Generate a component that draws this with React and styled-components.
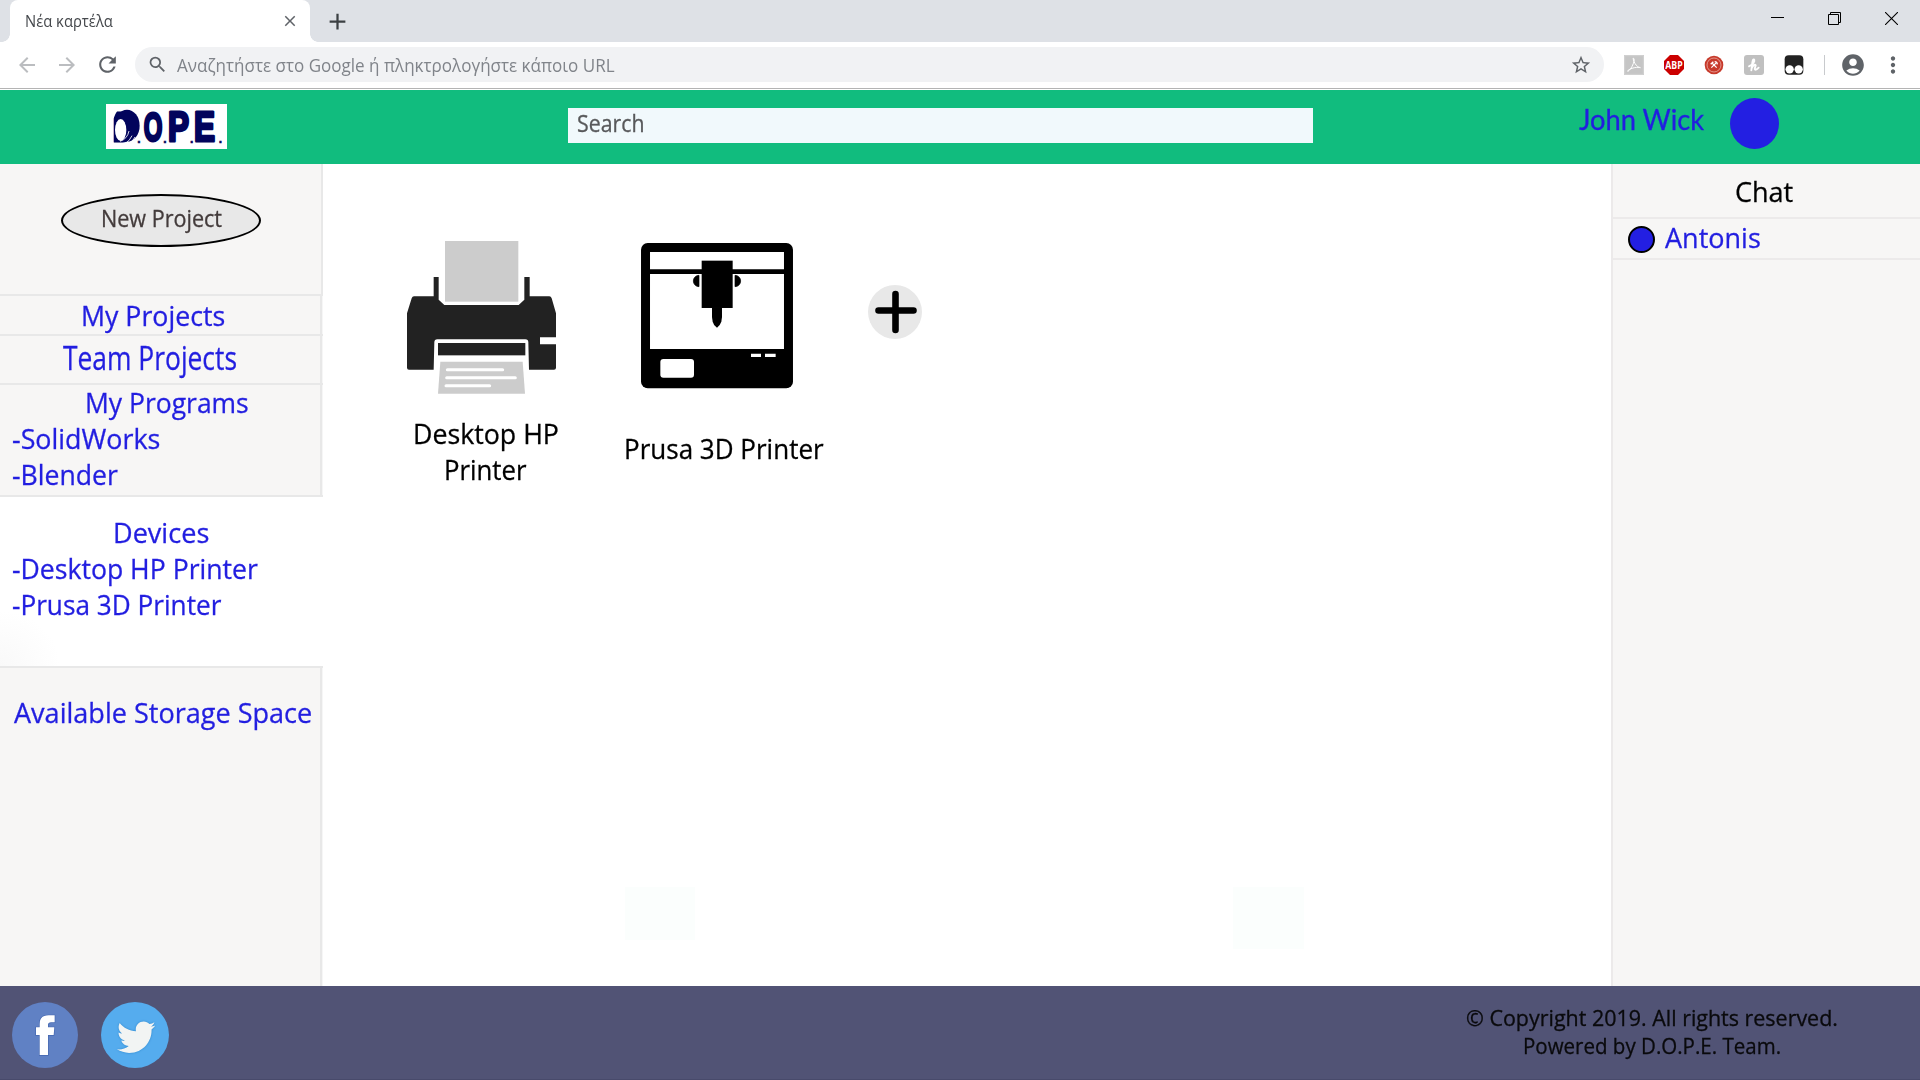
import React from 'react';
import styled, { createGlobalStyle } from 'styled-components';
import {
  MdArrowBack, MdArrowForward, MdRefresh, MdSearch, MdStarBorder,
  MdAccountCircle, MdMoreVert, MdClose, MdAdd,
} from 'react-icons/md';
import { FaTwitter } from 'react-icons/fa';

const LINK = '#221ee0';
const PANEL = '#f7f6f5';
const RULE = '#e8e8e8';

const Global = createGlobalStyle`
  * { box-sizing: border-box; }
  body {
    margin: 0;
    background: #fff;
    font-family: "Open Sans", "Noto Sans", sans-serif;
    overflow: hidden;
  }
  svg { display: block; flex: none; }
`;

const Page = styled.div`
  display: flex;
  flex-direction: column;
  width: 1920px;
  height: 1080px;
`;

/* Text */
const Label = styled.span`
  display: block;
  width: max-content;
  flex: none;
  margin-left: ${(p) => p.$indent || 0}px;
  font-family: ${(p) => (p.$face ? `"${p.$face}",` : '')} "Open Sans", sans-serif;
  font-size: ${(p) => p.$size || 28}px;
  line-height: ${(p) => p.$lead || 36}px;
  color: ${(p) => p.$color || LINK};
  white-space: nowrap;
  -webkit-text-stroke: ${(p) => (p.$thin ? '0' : '0.3px')} currentColor;
  transform: scaleX(${(p) => p.$stretch || 1});
  transform-origin: left center;
`;

/* Browser frame */
const TabStrip = styled.div`
  display: flex;
  flex: none;
  height: 42px;
  padding-left: 2px;
  background: #dee1e6;
`;

const TabFoot = styled.div`
  width: 8px;
  height: 42px;
  background: radial-gradient(circle at ${(p) => (p.$side === 'left' ? '0 0' : '100% 0')}, #dee1e6 7.5px, #fff 8px) bottom / 8px 8px no-repeat;
`;

const Tab = styled.div`
  display: flex;
  align-items: center;
  justify-content: space-between;
  width: 300px;
  height: 42px;
  padding: 0 11px 0 15px;
  border-radius: 8px 8px 0 0;
  background: #fff;
  color: #5f6368;
`;

const NewTab = styled.div`
  display: flex;
  align-items: center;
  margin-left: 6px;
  color: #3c4043;
`;

const WindowButtons = styled.div`
  display: flex;
  align-items: center;
  gap: 44px;
  height: 37px;
  margin-left: auto;
  padding-right: 22px;
`;

const Toolbar = styled.div`
  display: flex;
  flex: none;
  align-items: center;
  height: 46px;
  padding: 0 0 1px 15px;
  background: #fff;
  color: #5f6368;
`;

const NavIcon = styled.div`
  display: flex;
  margin-right: ${(p) => p.$after}px;
  color: ${(p) => (p.$off ? '#bbbdc0' : '#5f6368')};
`;

const Omnibox = styled.div`
  display: flex;
  align-items: center;
  width: 1469px;
  height: 35px;
  padding: 0 12px;
  border-radius: 18px;
  background: #f1f2f4;
`;

const StarSlot = styled.div`
  display: flex;
  margin-left: auto;
`;

const Extensions = styled.div`
  display: flex;
  align-items: center;
  gap: 20px;
  margin-left: 20px;
`;

const Divider = styled.div`
  width: 1px;
  height: 20px;
  margin: 0 14.5px 0 20px;
  background: #c8cacd;
`;

const ProfileSlot = styled.div`
  display: flex;
  margin-right: 14px;
`;

const FrameEdge = styled.div`
  flex: none;
  height: 2px;
  border-top: 1px solid #b4b4b4;
  background: #fff;
`;

/* Site header */
const Header = styled.header`
  display: flex;
  flex: none;
  align-items: flex-start;
  height: 74px;
  padding-left: 106px;
  background: #11bc7e;
`;

const LogoSlot = styled.div`
  margin: 14px 341px 0 0;
`;

const SearchField = styled.div`
  display: flex;
  align-items: center;
  width: 745px;
  height: 35px;
  margin-top: 18px;
  padding: 0 0 5px 9px;
  background: #f1f9fc;
`;

const UserName = styled.div`
  width: 151px;
  margin: 11px 0 0 266px;
`;

const Avatar = styled.div`
  width: 49px;
  height: 51px;
  margin-top: 8px;
  border-radius: 50%;
  background: #231fe2;
`;

/* Columns */
const Body = styled.div`
  display: flex;
  flex: none;
  height: 822px;
`;

const Sidebar = styled.nav`
  display: flex;
  flex-direction: column;
  flex: none;
  width: 323px;
`;

const CreateBlock = styled.div`
  height: 130px;
  padding: 30px 0 0 61px;
  border-right: 2px solid ${RULE};
  background: ${PANEL};
`;

const NewProject = styled.button`
  display: flex;
  align-items: center;
  width: 200px;
  height: 53px;
  padding: 0 0 6px 37.5px;
  border: 2px solid #000;
  border-radius: 50%;
  background: #e8e8e8;
`;

const Section = styled.section`
  width: 323px;
  height: ${(p) => p.$height}px;
  padding-top: ${(p) => p.$top || 0}px;
  border-top: 2px solid ${RULE};
  border-bottom: ${(p) => (p.$last ? `2px solid ${RULE}` : '0')};
  background: linear-gradient(${RULE}, ${RULE}) 320px 0 / 2px 100% no-repeat,
    linear-gradient(#f6f6f6, #f6f6f6) 322px 0 / 1px 100% no-repeat,
    ${PANEL};
`;

const Programs = styled.div`
  margin-top: -1px;
`;

const ActiveSection = styled.section`
  height: 169px;
  padding-top: 17px;
  background: radial-gradient(ellipse 60px 55px at 0 100%, #f9f9f9, #fff);
`;

const Main = styled.main`
  display: flex;
  flex: 1;
  align-items: flex-start;
  padding-left: 84px;
  background:
    linear-gradient(#fbfefd, #fbfefd) 302px 723px / 70px 53px no-repeat,
    linear-gradient(#fbfefd, #fbfefd) 910px 723px / 71px 62px no-repeat,
    #fff;
`;

const Device = styled.div`
  width: ${(p) => p.$width}px;
  padding-top: ${(p) => p.$top}px;
`;

const DeviceIcon = styled.div`
  height: ${(p) => p.$height}px;
  padding-left: ${(p) => p.$inset || 0}px;
`;

const AddDevice = styled.div`
  padding-top: 121px;
`;

const ChatPanel = styled.aside`
  flex: none;
  width: 309px;
  border-left: 2px solid #eceaea;
  background: ${PANEL};
`;

const ChatTitle = styled.div`
  height: 55px;
  padding-top: 9px;
  border-bottom: 2px solid #eceaea;
`;

const Contact = styled.div`
  display: flex;
  align-items: center;
  height: 41px;
  padding-left: 15px;
  border-bottom: 2px solid #eceaea;
`;

const Presence = styled.div`
  width: 27px;
  height: 27px;
  margin-top: 2px;
  border: 2px solid #000;
  border-radius: 50%;
  background: #231fe2;
`;

const ContactName = styled.div`
  padding: 0 0 4px 10px;
`;

/* Footer */
const Footer = styled.footer`
  display: flex;
  flex: none;
  align-items: flex-start;
  height: 94px;
  padding: 16px 0 0 12px;
  border-bottom: 1px solid #484a6b;
  background: #515375;
`;

const Social = styled.div`
  display: flex;
  gap: 23px;
`;

const TwitterBadge = styled.div`
  display: flex;
  align-items: center;
  justify-content: center;
  width: 68px;
  height: 66px;
  padding: 4px 0 0 2px;
  border-radius: 50%;
  background: #55acee;
  color: #f2f4f3;
  svg { filter: drop-shadow(0 0 1px #2d86cc); }
`;

const Legal = styled.div`
  margin: 2px 0 0 1297px;
`;

function Logo() {
  const ink = '#02045c';
  return (
    <svg width="121" height="45" viewBox="48 27 363 135">
      <rect x="48" y="27" width="363" height="135" fill="#fff" />
      <g fill={ink} stroke={ink} strokeLinejoin="round" strokeWidth="9" fontFamily='"Liberation Sans", sans-serif' fontWeight="700">
        <text x="66" y="138" fontSize="124" textLength="68" lengthAdjust="spacingAndGlyphs">D</text>
        <text x="161" y="137" fontSize="121" textLength="56" lengthAdjust="spacingAndGlyphs">O</text>
        <text x="234" y="138" fontSize="125" textLength="63" lengthAdjust="spacingAndGlyphs">P</text>
        <text x="312" y="138" fontSize="125" textLength="63" lengthAdjust="spacingAndGlyphs">E</text>
      </g>
      <ellipse cx="111" cy="92" rx="38" ry="48" fill={ink} />
      <path d="M60 30H100Q78 46 71 70L60 72Z" fill="#fff" />
      <ellipse cx="92" cy="105" rx="17" ry="33" fill="#fff" />
      <path d="M60 66H71V155H60Z" fill="#fff" />
      <path d="M90 139Q112 132 117 108M103 147Q120 138 126 122M115 147Q130 138 135 126" fill="none" stroke="#fff" strokeWidth="2.5" />
      <g fill={ink} stroke={ink} strokeWidth="1.5" fontFamily='"Liberation Sans", sans-serif' fontWeight="700" fontSize="36">
        <text x="142" y="143">.</text>
        <text x="220" y="143">.</text>
        <text x="300" y="143">.</text>
        <text x="386" y="143">.</text>
      </g>
    </svg>
  );
}

function PaperPrinter() {
  return (
    <svg width="149" height="152.7" viewBox="21 33 447 458">
      <rect x="135" y="33" width="220" height="182" fill="#ccc" />
      <path
        d="M101 141H116V209L133 225H356L373 209V141H389V199H448Q453 199 455 205L468 250V322H420V343H468V413Q468 419 462 419H387L385 337Q385 328 376 328H112Q103 328 103 337L101 419H27Q21 419 21 413V250L35 205Q37 199 42 199H101Z"
        fill="#222"
      />
      <rect x="114" y="339" width="262" height="37" fill="#222" />
      <path d="M121 395H368L375 491H114Z" fill="#ccc" />
      <path d="M142 419H308M140 443H346M138 467H269" stroke="#fff" strokeWidth="9" strokeLinecap="round" />
    </svg>
  );
}

function FilamentPrinter() {
  return (
    <svg width="152" height="145.3" viewBox="723 40 456 436">
      <rect x="723" y="40" width="456" height="436" rx="20" />
      <path d="M750 67H1152V119H750ZM750 133H1152V358H750Z" fill="#fff" />
      <rect x="905" y="93" width="93" height="142" />
      <path d="M897 137V171A17 17 0 0 1 897 137ZM1005 137V171A17 17 0 0 0 1005 137Z" stroke="#000" strokeWidth="2" />
      <path d="M936 234H966V262L964 276Q960 288 951 294Q941 288 938 276L936 262Z" />
      <rect x="781" y="388" width="101" height="56" rx="9" fill="#fff" />
      <path d="M1053 372H1083V382H1053ZM1095 372H1127V382H1095Z" fill="#fff" />
    </svg>
  );
}

function PlusBadge() {
  return (
    <svg width="54" height="54" viewBox="0 0 54 54">
      <circle cx="27" cy="27" r="27" fill="#e8e8e8" />
      <path d="M10.5 25.5H45.5M27.5 9V45" stroke="#000" strokeWidth="6.6" strokeLinecap="round" />
    </svg>
  );
}

function FacebookBadge() {
  return (
    <svg width="66" height="66" viewBox="36 96 198 198">
      <circle cx="135" cy="195" r="99" fill="#6081c4" />
      <path
        d="M119 255V195H108V172H119V161Q119 136 146 136H164V157H153Q144 157 144 165V172H163L161 195H144V255Z"
        fill="#fff" stroke="#4467b0" strokeWidth="4" paintOrder="stroke"
      />
    </svg>
  );
}

function ExtensionIcons() {
  return (
    <>
      <svg width="20" height="20" viewBox="0 0 60 60">
        <rect width="60" height="60" fill="#c5c5c5" />
        <rect x="2" y="2" width="56" height="56" fill="none" stroke="#d2d2d2" strokeWidth="3" />
        <path d="M28 10C36 10 24 42 12 49C6 50 20 36 46 37C58 39 34 42 27 10Z" fill="none" stroke="#fff" strokeWidth="3" />
      </svg>
      <svg width="20" height="20" viewBox="0 0 60 60">
        <path d="M18 0H42L60 18V42L42 60H18L0 42V18Z" fill="#cb0000" />
        <text x="30" y="41" textAnchor="middle" fontFamily="Open Sans, sans-serif" fontWeight="700" fontSize="30" fill="#fff" textLength="52" lengthAdjust="spacingAndGlyphs">ABP</text>
      </svg>
      <svg width="20" height="20" viewBox="0 0 60 60">
        <circle cx="30" cy="30" r="28" fill="#c73a2b" />
        <circle cx="30" cy="30" r="21" fill="none" stroke="#e9a79f" strokeWidth="2.5" />
        <path d="M22 38L36 24M38 38L24 24" stroke="#fff" strokeWidth="3.5" />
        <path d="M20 28L28 20M32 20Q39 20 40 28" fill="none" stroke="#fff" strokeWidth="4" />
      </svg>
      <svg width="20" height="20" viewBox="0 0 60 60">
        <rect width="60" height="60" rx="9" fill="#c0c0c0" />
        <path d="M15 34Q33 24 31 15Q27 9 25 22L22 46M23 40Q31 25 35 31L32 42Q34 48 44 38" fill="none" stroke="#fff" strokeWidth="5.5" strokeLinecap="round" />
      </svg>
      <svg width="20" height="20" viewBox="0 0 60 60">
        <rect x="2" y="1" width="56" height="58" rx="12" fill="#222" />
        <circle cx="17" cy="43" r="12.5" fill="#fff" />
        <circle cx="44" cy="43" r="12.5" fill="#fff" />
      </svg>
    </>
  );
}

function BrowserFrame() {
  return (
    <>
      <TabStrip>
        <TabFoot $side="left" />
        <Tab>
          <Label $thin $size={15.5} $lead={20} $stretch={0.955} $color="#45484c">Νέα καρτέλα</Label>
          <MdClose size={18} />
        </Tab>
        <TabFoot $side="right" />
        <NewTab><MdAdd size={27} /></NewTab>
        <WindowButtons>
          <svg width="13" height="13" viewBox="0 0 13 13"><path d="M0 5.5H13" stroke="#000" /></svg>
          <svg width="13" height="13" viewBox="0 0 13 13">
            <path d="M.5 2.5H10.5V12.5H.5ZM2.5 2.5V.5H12.5V10.5H10.5" fill="none" stroke="#000" />
          </svg>
          <svg width="13" height="13" viewBox="0 0 13 13"><path d="M0 0L13 13M13 0L0 13" stroke="#000" strokeWidth="1.1" /></svg>
        </WindowButtons>
      </TabStrip>
      <Toolbar>
        <NavIcon $off $after={16}><MdArrowBack size={24} /></NavIcon>
        <NavIcon $off $after={16}><MdArrowForward size={24} /></NavIcon>
        <NavIcon $after={15}><MdRefresh size={25} /></NavIcon>
        <Omnibox>
          <MdSearch size={21} />
          <Label $thin $size={18} $lead={24} $stretch={0.946} $indent={9} $color="#80848a">Αναζητήστε στο Google ή πληκτρολογήστε κάποιο URL</Label>
          <StarSlot><MdStarBorder size={22} /></StarSlot>
        </Omnibox>
        <Extensions><ExtensionIcons /></Extensions>
        <Divider />
        <ProfileSlot><MdAccountCircle size={26} /></ProfileSlot>
        <MdMoreVert size={26} />
      </Toolbar>
      <FrameEdge />
    </>
  );
}

export default function App() {
  return (
    <Page>
      <Global />
      <BrowserFrame />
      <Header>
        <LogoSlot><Logo /></LogoSlot>
        <SearchField>
          <Label $size={23} $lead={30} $stretch={0.926} $color="#58595b">Search</Label>
        </SearchField>
        <UserName>
          <Label $face="Lato" $stretch={0.975}>John Wick</Label>
        </UserName>
        <Avatar />
      </Header>
      <Body>
        <Sidebar>
          <CreateBlock>
            <NewProject>
              <Label $size={23} $lead={30} $stretch={0.938} $color="#433b3b">New Project</Label>
            </NewProject>
          </CreateBlock>
          <Section $height={40} $top={1}>
            <Label $stretch={0.954} $indent={81}>My Projects</Label>
          </Section>
          <Section $height={49} $top={4}>
            <Label $size={33} $stretch={0.8} $indent={63}>Team Projects</Label>
          </Section>
          <Section $height={114} $last>
            <Programs>
              <Label $stretch={0.946} $indent={85}>My Programs</Label>
              <Label $stretch={0.959} $indent={11.5}>-SolidWorks</Label>
              <Label $stretch={0.951} $indent={11.5}>-Blender</Label>
            </Programs>
          </Section>
          <ActiveSection>
            <Label $stretch={0.967} $indent={113}>Devices</Label>
            <Label $stretch={0.95} $indent={11.5}>-Desktop HP Printer</Label>
            <Label $stretch={0.935} $indent={11.5}>-Prusa 3D Printer</Label>
          </ActiveSection>
          <Section $height={320} $top={26}>
            <Label $stretch={0.966} $indent={14}>Available Storage Space</Label>
          </Section>
        </Sidebar>
        <Main>
          <Device $width={216} $top={77}>
            <DeviceIcon $height={174}><PaperPrinter /></DeviceIcon>
            <Label $stretch={0.955} $indent={6} $color="#000">Desktop HP</Label>
            <Label $stretch={0.92} $indent={37} $color="#000">Printer</Label>
          </Device>
          <Device $width={245} $top={79.3}>
            <DeviceIcon $height={186.5} $inset={18}><FilamentPrinter /></DeviceIcon>
            <Label $stretch={0.929} $indent={0.8} $color="#000">Prusa 3D Printer</Label>
          </Device>
          <AddDevice><PlusBadge /></AddDevice>
        </Main>
        <ChatPanel>
          <ChatTitle>
            <Label $stretch={0.965} $indent={122} $color="#000">Chat</Label>
          </ChatTitle>
          <Contact>
            <Presence />
            <ContactName><Label $stretch={0.965}>Antonis</Label></ContactName>
          </Contact>
        </ChatPanel>
      </Body>
      <Footer>
        <Social>
          <FacebookBadge />
          <TwitterBadge><FaTwitter size={38.5} /></TwitterBadge>
        </Social>
        <Legal>
          <Label $size={22.4} $lead={28} $stretch={0.958} $color="#0a0a0c">© Copyright 2019. All rights reserved.</Label>
          <Label $size={22.4} $lead={28} $stretch={0.916} $indent={57} $color="#0a0a0c">Powered by D.O.P.E. Team.</Label>
        </Legal>
      </Footer>
    </Page>
  );
}
